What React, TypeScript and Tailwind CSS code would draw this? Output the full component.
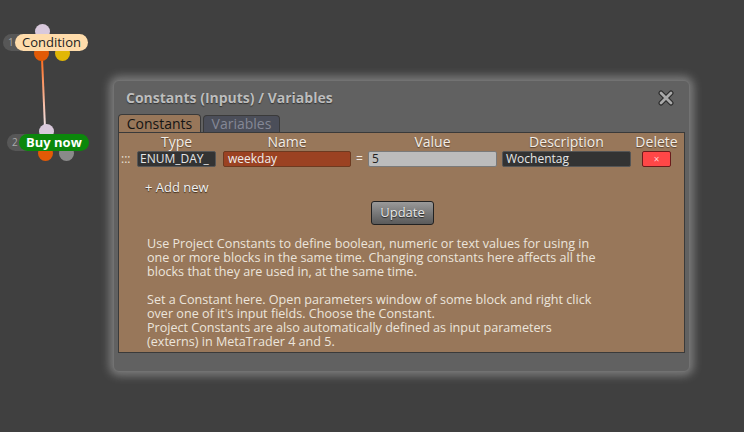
import { useState } from 'react';

const FONT = { fontFamily: '"Open Sans", "Noto Sans", sans-serif' };

function Node({
  x,
  y,
  num,
  label,
  pill,
  dots,
}: {
  x: number;
  y: number;
  num: string;
  label: string;
  pill: string;
  dots: string[];
}) {
  return (
    <div className="absolute" style={{ left: x, top: y }}>
      {/* connector dots sit behind the pills */}
      <span className="absolute left-[32px] top-[-10px] size-[15px] rounded-full bg-[#d9c9dc]" />
      <span className={`absolute left-[31px] top-[12px] size-[15px] rounded-full ${dots[0]}`} />
      <span className={`absolute left-[52px] top-[12px] size-[15px] rounded-full ${dots[1]}`} />
      <div className="relative flex items-center">
        <div className="flex h-[17px] w-[40px] items-center rounded-full bg-[#575757] pl-[5px] text-[10px] text-[#a9a9a9]">
          {num}
        </div>
        <div
          className={`-ml-[28px] flex h-[17px] items-center rounded-full px-[7px] text-[13px] leading-none ${pill}`}
        >
          {label}
        </div>
      </div>
    </div>
  );
}

function Head({ w, children }: { w: string; children?: string }) {
  return <span className={`flex justify-center whitespace-nowrap ${w}`}>{children}</span>;
}

export default function App() {
  const [tab, setTab] = useState<'constants' | 'variables'>('constants');

  return (
    <div className="relative h-[432px] w-[744px] overflow-hidden bg-[#404040]" style={FONT}>
      {/* canvas: blocks and link */}
      <svg className="absolute left-0 top-0" width="120" height="160">
        <defs>
          <linearGradient id="link" x1="0" y1="0" x2="0" y2="1">
            <stop offset="0" stopColor="#ff6a1a" />
            <stop offset="1" stopColor="#f3e8ee" />
          </linearGradient>
        </defs>
        <line x1="42" y1="58" x2="45" y2="128" stroke="url(#link)" strokeWidth="2" />
      </svg>
      <Node
        x={3}
        y={34}
        num="1"
        label="Condition"
        pill="bg-[#ffdcab] text-[#1e1e1e]"
        dots={['bg-[#e25a06]', 'bg-[#e1b705]']}
      />
      <Node
        x={7}
        y={134}
        num="2"
        label="Buy now"
        pill="bg-[#0b870b] font-bold text-white"
        dots={['bg-[#e25a06]', 'bg-[#8a8a8a]']}
      />

      {/* dialog window */}
      <div className="absolute left-[113px] top-[80px] flex h-[292px] w-[577px] flex-col rounded-[6px] border border-[#727272] bg-[#616161] shadow-[0_0_9px_4px_rgba(190,190,190,0.45)]">
        <div className="flex h-[33px] items-center justify-between pl-[12px] pr-[15px]">
          <span className="text-[14px] font-bold text-[#bdbdbd] [text-shadow:0_1px_1px_#333]">
            Constants (Inputs) / Variables
          </span>
          <svg width="16" height="16" viewBox="0 0 16 16">
            <path d="M3 3 L13 13 M13 3 L3 13" stroke="#2b2b2b" strokeWidth="5" strokeLinecap="round" />
            <path d="M3 3 L13 13 M13 3 L3 13" stroke="#a9a9a9" strokeWidth="2.8" strokeLinecap="round" />
          </svg>
        </div>

        <div className="mx-[4px] flex gap-[2px]">
          <button
            onClick={() => setTab('constants')}
            className="h-[18px] w-[83px] rounded-t-[4px] border border-b-0 border-[#3a3a3a] bg-[#98775a] text-[14px] leading-none text-[#141414]"
          >
            Constants
          </button>
          <button
            onClick={() => setTab('variables')}
            className="h-[17px] w-[77px] self-end rounded-t-[4px] border border-b-0 border-[#3a3a3a] bg-[#4b4e59] text-[14px] leading-none text-[#858896]"
          >
            Variables
          </button>
        </div>

        <div className="mx-[4px] h-[221px] border border-[#3a3a3a] bg-[#98775a] text-[#f3ede6]">
          {/* header row */}
          <div className="flex h-[18px] items-center pl-[18px] text-[14px] leading-none [text-shadow:0_1px_1px_#5a4330]">
            <Head w="w-[79px]">Type</Head>
            <Head w="w-[7px]" />
            <Head w="w-[128px]">Name</Head>
            <Head w="w-[17px]" />
            <Head w="w-[129px]">Value</Head>
            <Head w="w-[5px]" />
            <Head w="w-[129px]">Description</Head>
            <Head w="w-[11px]" />
            <Head w="w-[29px]">Delete</Head>
          </div>

          {/* constant row */}
          <div className="flex h-[16px] items-center pl-[2px] text-[12px] leading-none">
            <span className="w-[16px] text-[#e8e0d6]">:::</span>
            <div className="flex h-[16px] w-[79px] items-center overflow-hidden rounded-[2px] border border-[#555] bg-[#333] px-[2px] text-[#e6e6e6]">
              ENUM_DAY_
            </div>
            <div className="ml-[7px] flex h-[16px] w-[128px] items-center rounded-[2px] border border-[#6e3a20] bg-[#9b4222] px-[4px] text-[#eee]">
              weekday
            </div>
            <span className="w-[17px] text-center text-[#f0e8e0]">=</span>
            <div className="flex h-[16px] w-[129px] items-center rounded-[2px] border border-[#7a7a7a] bg-[#bcbcbc] px-[3px] text-[#222]">
              5
            </div>
            <div className="ml-[5px] flex h-[16px] w-[129px] items-center rounded-[2px] border border-[#555] bg-[#333] px-[3px] text-[#e6e6e6]">
              Wochentag
            </div>
            <button className="ml-[11px] flex h-[16px] w-[29px] items-center justify-center rounded-[2px] border border-[#6a1c1c] bg-[#ff4747] text-[10px] text-[#ffd0d0]">
              ×
            </button>
          </div>

          <div className="mt-[12px] pl-[26px] text-[13px] leading-[16px] text-[#f2f2f2] [text-shadow:0_1px_1px_#3d2c1c]">
            + Add new
          </div>

          <div className="mt-[6px] flex justify-center pl-[2px]">
            <button className="h-[24px] w-[63px] rounded-[3px] border border-[#222] bg-gradient-to-b from-[#9a9a9a] to-[#5a5a5a] text-[13px] text-[#e8e8e8] [text-shadow:0_1px_1px_#222]">
              Update
            </button>
          </div>

          <div className="mt-[12px] pl-[28px] text-[12.6px] leading-[14px] whitespace-nowrap text-[#ece5dc]">
            <p>
              Use Project Constants to define boolean, numeric or text values for using in
              <br />
              one or more blocks in the same time. Changing constants here affects all the
              <br />
              blocks that they are used in, at the same time.
            </p>
            <p className="mt-[14px]">
              Set a Constant here. Open parameters window of some block and right click
              <br />
              over one of it's input fields. Choose the Constant.
              <br />
              Project Constants are also automatically defined as input parameters
              <br />
              (externs) in MetaTrader 4 and 5.
            </p>
          </div>
        </div>
      </div>
    </div>
  );
}
